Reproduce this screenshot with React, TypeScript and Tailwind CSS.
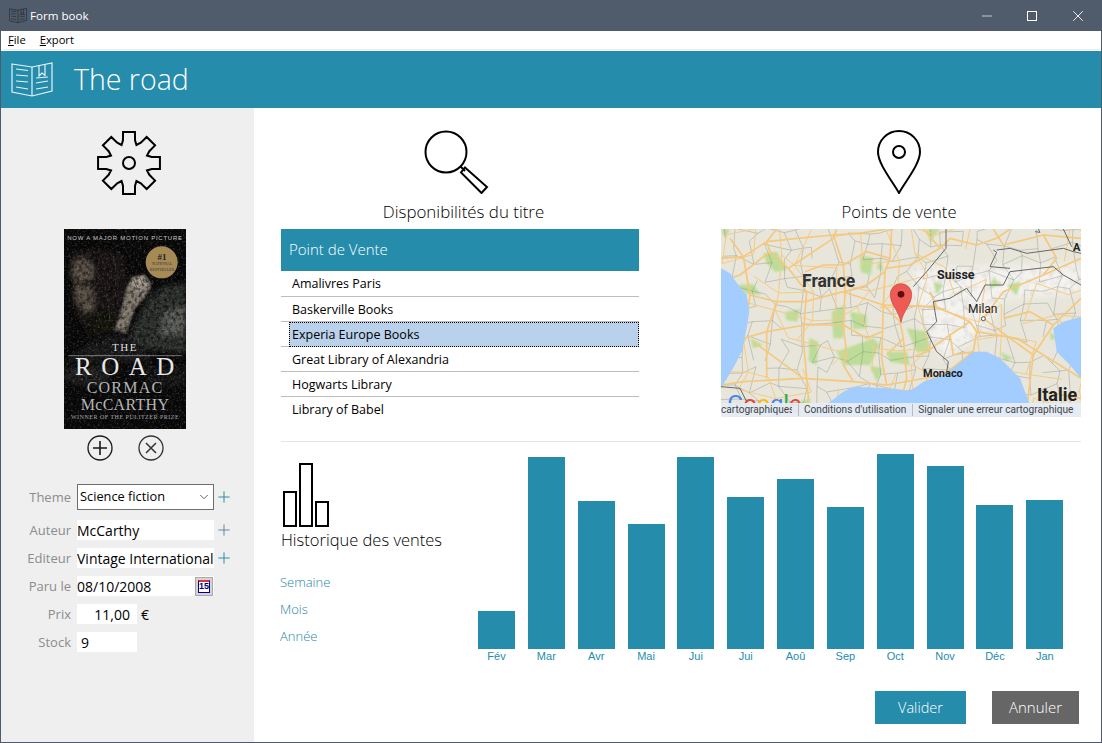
import React from 'react';
import { ChevronDown, Plus, Minus, X } from 'lucide-react';

const sales = [
  { label: 'Fév', height: 38 },
  { label: 'Mar', height: 192 },
  { label: 'Avr', height: 148 },
  { label: 'Mai', height: 125 },
  { label: 'Jui', height: 192 },
  { label: 'Jui', height: 152 },
  { label: 'Aoû', height: 170 },
  { label: 'Sep', height: 142 },
  { label: 'Oct', height: 195 },
  { label: 'Nov', height: 183 },
  { label: 'Déc', height: 144 },
  { label: 'Jan', height: 149 },
];

const stores = ['Amalivres Paris', 'Baskerville Books', 'Experia Europe Books', 'Great Library of Alexandria', 'Hogwarts Library', 'Library of Babel'];

// Gear outline: 8 square teeth around a centre
const gearPoints = () => {
  const pts: string[] = [];
  const at = (r: number, a: number) => `${(34 + r * Math.cos(a)).toFixed(2)},${(34 + r * Math.sin(a)).toFixed(2)}`;
  for (let i = 0; i < 8; i++) {
    const a = (i * Math.PI) / 4 - Math.PI / 2;
    pts.push(at(23.5, a - 0.26), at(31.5, a - 0.19), at(31.5, a + 0.19), at(23.5, a + 0.26), at(19.5, a + Math.PI / 8));
  }
  return pts.join(' ');
};

// Jittered net for the small roads of the map
const jitter = (n: number) => {
  const v = Math.sin(n * 127.1) * 43758.5453;
  return v - Math.floor(v) - 0.5;
};
const roadNet = (step: number, seed: number, skip: number) => {
  let d = '';
  const node = (c: number, r: number) => {
    const k = c * 31 + r * 57 + seed;
    return `${(33 + c * step + jitter(k) * step * 0.8).toFixed(0)} ${(312 + r * step + jitter(k + 9) * step * 0.8).toFixed(0)}`;
  };
  for (let c = 0; c <= Math.ceil(1080 / step); c++) {
    for (let r = 0; r <= Math.ceil(564 / step); r++) {
      if (jitter(c * 13 + r * 7 + seed) > skip) d += `M${node(c, r)} L${node(c + 1, r)} `;
      if (jitter(c * 5 + r * 17 + seed + 3) > skip) d += `M${node(c, r)} L${node(c, r + 1)} `;
    }
  }
  return d;
};
const greyNet = roadNet(48, 3, -0.2);
const orangeNet = roadNet(85, 11, -0.05);

const majorRoads = [
  'M33 400 L100 395 L170 350 L260 340 L370 330 L450 325 L530 312',
  'M170 350 L200 312',
  'M170 350 L180 380 L235 430 L290 500 L285 560 L280 640 L290 760 L300 876',
  'M235 430 L370 340 L380 312',
  'M370 330 L400 420 L405 500 L400 600 L410 690 L400 720 L430 770',
  'M120 510 L200 530 L285 530 L400 500 L520 540 L570 590',
  'M545 312 L540 400 L525 440 L520 540 L515 700 L530 780',
  'M525 430 L600 420 L690 370 L720 340 L800 360 L860 340 L900 312',
  'M570 590 L580 640 L590 760 L580 800',
  'M520 540 L680 545 L780 590 L800 620 L920 640 L1113 760',
  'M800 620 L790 680',
  'M680 545 L660 500',
  'M100 640 L170 620 L285 600 L400 600',
  'M130 650 L280 760 L430 770 L530 780 L700 750 L790 680',
  'M33 780 L100 770 L280 760',
  'M170 620 L170 760',
  'M820 580 L880 500 L1000 450 L1113 400',
  'M820 580 L900 640 L970 690 L950 850',
  'M970 690 L1030 600 L1113 520',
  'M850 312 L880 360 L1000 330 L1113 340',
  'M720 630 L730 690 L790 680',
  'M580 640 L530 690',
  'M33 470 L90 450 L180 380',
  'M60 340 L100 395 L120 510 L100 640',
  'M400 420 L470 380 L540 400',
  'M405 500 L470 480 L525 440',
  'M640 312 L690 370',
  'M400 600 L470 640 L515 620',
  'M880 580 L960 560 L1030 600',
  'M600 700 L650 680 L720 630 L780 590',
  'M1000 330 L1040 400 L1000 450',
  'M200 530 L170 620',
  'M285 440 L340 420 L400 420',
  'M1000 800 L1113 820',
];

const greens = [
  'M160 385 L200 380 L232 435 L195 440 L170 415 Z',
  'M450 392 L490 398 L482 450 L452 440 Z',
  'M80 480 L130 478 L152 510 L105 505 Z',
  'M225 562 L270 552 L262 590 L228 585 Z',
  'M298 640 L325 650 L320 720 L296 708 Z',
  'M365 560 L405 540 L400 640 L370 640 Z',
  'M420 560 L470 570 L470 610 L430 612 Z',
  'M380 680 L490 640 L510 660 L480 720 L400 720 Z',
  'M590 610 L650 620 L660 680 L620 682 Z',
  'M530 680 L590 680 L600 720 L540 710 Z',
  'M480 722 L520 730 L500 770 Z',
  'M850 458 L872 480 L838 490 Z',
  'M890 480 L932 470 L920 512 Z',
  'M870 680 L910 700 L885 708 Z',
  'M1020 620 L1042 640 L1022 645 Z',
  'M650 312 L690 312 L660 350 Z',
  'M120 640 L160 660 L130 670 Z',
  'M510 402 L522 440 L500 430 Z',
  'M33 312 L60 312 L45 340 Z',
  'M670 470 L700 480 L680 510 Z',
  'M240 840 L300 820 L300 876 L240 876 Z',
];

const borders = [
  'M708 312 L708 370 L650 440 L610 485',
  'M670 530 L720 520 L770 490 L800 530 L825 480 L880 480 L900 440 L1030 425 L1060 450 L1113 480',
  'M670 530 L680 590 L650 620 L680 680 L715 710 L710 740',
  'M850 375 L860 382 L840 425 L900 430',
  'M860 375 L900 370 L950 385 L1060 370 L1090 380 L1113 385',
  'M1060 312 L1085 365',
  'M985 312 L990 322 L975 320',
  'M33 785 L90 790 L110 830',
];

function MapView() {
  return (
    <div className="relative h-[188px] w-[360px] overflow-hidden bg-[#e8e6da] font-['Roboto',sans-serif]">
      <svg viewBox="33 312 1080 564" className="absolute inset-0 h-full w-full">
        <defs>
          <filter id="snow"><feGaussianBlur stdDeviation="12" /></filter>
          <filter id="soft"><feGaussianBlur stdDeviation="3" /></filter>
          <filter id="rock">
            <feTurbulence type="fractalNoise" baseFrequency="0.05" numOctaves="3" seed="8" />
            <feColorMatrix values="0 0 0 0 0.55  0 0 0 0 0.55  0 0 0 0 0.55  2.2 0 0 0 -1" />
          </filter>
          <clipPath id="alps">
            <path d="M610 430 L1113 420 L1113 500 L880 520 L820 620 L700 700 L650 620 L610 520 Z" />
          </clipPath>
        </defs>
        <path d="M610 430 L1113 420 L1113 500 L880 520 L820 620 L700 700 L650 620 L610 520 Z" fill="#f4f3ef" filter="url(#snow)" />
        <rect x="600" y="410" width="513" height="300" filter="url(#rock)" clipPath="url(#alps)" opacity="0.45" />
        <g fill="#bcdc97" filter="url(#soft)">
          {greens.map((d, i) => <path key={i} d={d} />)}
        </g>
        <path d={greyNet} fill="none" stroke="#83857d" strokeWidth="1.5" opacity="0.75" />
        <path d={orangeNet} fill="none" stroke="#f6cb82" strokeWidth="3" />
        <g fill="none" stroke="#f5c87d" strokeWidth="5" strokeLinejoin="round">
          {majorRoads.map((d, i) => <path key={i} d={d} />)}
        </g>
        <g fill="#a3ccff">
          <path d="M33 430 L60 445 L85 480 L110 510 L118 560 L110 610 L95 680 L75 720 L33 790 Z" />
          <path d="M300 876 L400 800 L430 785 L530 790 L600 798 L640 770 L710 745 L790 680 L830 680 L870 700 L930 760 L960 840 L975 876 Z" />
          <path d="M1113 575 L1060 590 L1030 610 L1040 680 L1080 720 L1113 760 Z" />
        </g>
        <g fill="none" stroke="#66696b" strokeWidth="3" strokeLinejoin="round">
          {borders.map((d, i) => <path key={i} d={d} />)}
        </g>
        <circle cx="820" cy="581" r="6" fill="#fff" stroke="#333" strokeWidth="2.5" />
        <path d="M573 592 C566 555 541 540 541 508 A32 32 0 0 1 605 508 C605 540 580 555 573 592 Z" fill="#ee5b55" stroke="#c5403c" strokeWidth="2" />
        <circle cx="573" cy="508" r="10" fill="#5e0f0d" />
        <text x="52" y="861" fontSize="72" letterSpacing="-1">
          <tspan fill="#4285f4">G</tspan><tspan fill="#ea4335">o</tspan><tspan fill="#fbbc05">o</tspan><tspan fill="#4285f4">g</tspan><tspan fill="#34a853">l</tspan><tspan fill="#ea4335">e</tspan>
        </text>
      </svg>
      <span className="absolute left-[81px] top-[42px] text-[17.5px] font-bold leading-5 text-[#333]">France</span>
      <span className="absolute left-[216px] top-[38px] text-[12.5px] font-bold leading-4 text-[#222]">Suisse</span>
      <span className="absolute left-[247px] top-[72px] text-[12px] leading-4 text-[#222]">Milan</span>
      <span className="absolute left-[202px] top-[137px] text-[11px] font-bold leading-4 text-[#222]">Monaco</span>
      <span className="absolute left-[316px] top-[156px] text-[18px] font-bold leading-5 text-[#222]">Italie</span>
      <span className="absolute left-[352px] top-[11px] text-[11px] font-bold leading-4 text-[#222]">A</span>
      <div className="absolute bottom-0 left-0 right-0 flex h-[14px] items-center whitespace-nowrap bg-[#e6ecf6]/95 text-[10.1px] text-[#444]">
        <span className="w-[71px] overflow-hidden text-right">cartographiques</span>
        <span className="ml-[6px] border-l border-[#bbb] pl-[5px] pr-[6px] leading-3">Conditions d'utilisation</span>
        <span className="ml-[0px] border-l border-[#bbb] pl-[5px] leading-3">Signaler une erreur cartographique</span>
      </div>
    </div>
  );
}

function BookCover() {
  return (
    <div className="relative h-[200px] w-[122px] overflow-hidden bg-[#0a0a0a] font-['Liberation_Serif',serif] text-white">
      <svg viewBox="42 327 366 600" className="absolute inset-0 h-full w-full">
        <defs>
          <filter id="cover"><feGaussianBlur stdDeviation="8" /></filter>
          <filter id="coverLight"><feGaussianBlur stdDeviation="3.5" /></filter>
          <filter id="grit">
            <feTurbulence type="fractalNoise" baseFrequency="0.16" numOctaves="3" seed="4" />
            <feColorMatrix values="0 0 0 0 1  0 0 0 0 1  0 0 0 0 1  2.4 0 0 0 -1.25" />
          </filter>
          <filter id="gritDark">
            <feTurbulence type="fractalNoise" baseFrequency="0.09" numOctaves="3" seed="9" />
            <feColorMatrix values="0 0 0 0 0  0 0 0 0 0  0 0 0 0 0  3 0 0 0 -1.2" />
          </filter>
        </defs>
        <g filter="url(#cover)">
          <path d="M60 400 L130 385 L220 400 L232 470 L210 600 L120 650 L70 560 Z" fill="#1c1815" />
          <path d="M68 425 L100 412 L132 440 L126 500 L134 560 L112 590 L88 555 L72 532 L80 490 L64 462 Z" fill="#5c5147" />
          <path d="M88 482 L128 478 L126 500 L94 502 Z" fill="#221c19" />
          <path d="M105 580 L190 560 L200 640 L125 650 Z" fill="#151311" />
          <path d="M300 530 L350 495 L408 490 L408 700 L220 680 L240 640 L275 570 Z" fill="#2e302e" />
          <path d="M340 580 L408 555 L408 640 L330 650 Z" fill="#5a5c59" />
          <path d="M120 670 L220 640 L285 685 L305 725 L42 725 Z" fill="#1e1f1e" />
          <path d="M42 745 L190 735 L165 800 L42 785 Z" fill="#222322" />
          <path d="M280 745 L408 735 L408 800 L300 810 Z" fill="#171817" />
        </g>
        <g filter="url(#coverLight)">
          <path d="M228 505 L246 472 L282 462 L305 490 L296 518 L256 565 L228 638 L194 630 L216 562 Z" fill="#857c71" />
          <path d="M240 482 L280 470 L296 495 L262 512 Z" fill="#aaa196" />
        </g>
        <path d="M250 478 L262 505 M268 470 L280 498 M284 468 L294 490" stroke="#3c3732" strokeWidth="2.5" opacity="0.7" />
        <path d="M80 405 L130 450 M110 395 L150 470 M150 400 L180 480 M190 410 L205 500 M170 520 L180 600 M135 560 L160 630" stroke="#4a443f" strokeWidth="2" fill="none" opacity="0.6" />
        <rect x="42" y="327" width="366" height="600" filter="url(#gritDark)" opacity="0.55" />
        <rect x="42" y="327" width="366" height="600" filter="url(#grit)" opacity="0.22" />
        <circle cx="335" cy="427" r="48" fill="#a68a56" />
        <path d="M55 707 L395 707" stroke="#ddd" strokeWidth="1.5" />
      </svg>
      <span className="absolute inset-x-0 top-[5px] whitespace-nowrap text-center font-['Liberation_Sans',sans-serif] text-[6px] leading-2 tracking-[0.75px] text-[#c8c8c8]">NOW A MAJOR MOTION PICTURE</span>
      <span className="absolute left-[82px] top-[22px] w-8 text-center text-[9px] font-bold leading-3 text-[#222]">#1</span>
      <span className="absolute left-[82px] top-[32px] w-8 text-center text-[4px] leading-[6px] text-[#333]">NATIONAL BESTSELLER</span>
      <span className="absolute inset-x-0 top-[112px] text-center text-[11px] leading-3 tracking-[1.5px] text-[#ddd]">THE</span>
      <span className="absolute inset-x-0 top-[124px] whitespace-nowrap pl-[9px] text-center text-[25px] font-light leading-7 tracking-[9.5px] text-[#e8e8e8]">ROAD</span>
      <span className="absolute inset-x-0 top-[151px] whitespace-nowrap text-center text-[16px] leading-4 tracking-[1.2px] text-[#b5b5b5]">CORMAC</span>
      <span className="absolute inset-x-0 top-[168px] whitespace-nowrap text-center text-[16px] leading-4 tracking-[0.3px] text-[#b5b5b5]">McCARTHY</span>
      <span className="absolute inset-x-0 top-[184px] whitespace-nowrap text-center text-[6px] leading-2 tracking-[0.5px] text-[#a5a5a5]">WINNER OF THE PULITZER PRIZE</span>
    </div>
  );
}

const BookIcon = ({ className }: { className: string }) => (
  <svg viewBox="0 0 42 35" fill="none" stroke="currentColor" strokeWidth="1.2" className={className}>
    <path d="M1 2 L21 5 L41 1 L41 29 L21 34 L1 30 Z" />
    <path d="M21 5 V34" />
    <path d="M28 3.8 V14 L31 11 L34 13.5 V2.8" />
    <path d="M5 7 L17 8.5 M5 13 L17 14 M5 19 L17 20 M5 25 L17 27 M25 27 L37 25 M25 21 L37 19 M25 16 L37 15" />
  </svg>
);

const FormLabel = ({ children }: { children: React.ReactNode }) => (
  <span className="w-[71px] pr-[1px] pt-[1px] text-right text-[13px] text-[#8c8c8c]">{children}</span>
);

const AddIcon = ({ dark }: { dark?: boolean }) => (
  <Plus size={18} strokeWidth={1.3} className={`ml-[-4px] ${dark ? 'text-[#5d8795]' : 'text-[#268cab]'}`} />
);

function Sidebar() {
  return (
    <aside className="flex w-[253px] shrink-0 flex-col bg-[#efefef]">
      <div className="flex justify-center pl-[3px] pt-[21px]">
        <svg viewBox="0 0 68 68" fill="none" stroke="#000" strokeWidth="2" className="h-[68px] w-[68px]">
          <polygon points={gearPoints()} />
          <circle cx="34" cy="34" r="6" />
        </svg>
      </div>
      <div className="mt-[32px] flex justify-center pr-[5px]">
        <BookCover />
      </div>
      <div className="mt-[6px] flex justify-center gap-[25px] pr-[5px]">
        <svg viewBox="0 0 26 26" fill="none" stroke="#1a1a1a" strokeWidth="1.3" className="h-[26px] w-[26px]">
          <circle cx="13" cy="13" r="12" />
          <path d="M6 13 H20 M13 6 V20" strokeWidth="1.6" />
        </svg>
        <svg viewBox="0 0 26 26" fill="none" stroke="#333" strokeWidth="1.3" className="h-[26px] w-[26px]">
          <circle cx="13" cy="13" r="12" />
          <path d="M8 8 L18 18 M18 8 L8 18" strokeWidth="1.5" />
        </svg>
      </div>
      <div className="mt-[23px] flex flex-col text-[14px] text-black">
        <div className="flex h-[26px] items-center gap-[5px]">
          <FormLabel>Theme</FormLabel>
          <div className="flex h-[26px] w-[137px] items-center justify-between border border-[#6e6e6e] bg-white pl-[2px] pr-[1px] text-[12.8px]">
            <span>Science fiction</span>
            <ChevronDown size={14} strokeWidth={1.4} className="mr-[1px] text-[#444]" />
          </div>
          <AddIcon />
        </div>
        <div className="mt-[10px] flex h-5 items-center gap-[5px]">
          <FormLabel>Auteur</FormLabel>
          <div className="flex h-5 w-[137px] items-center bg-white">McCarthy</div>
          <AddIcon dark />
        </div>
        <div className="mt-2 flex h-5 items-center gap-[5px]">
          <FormLabel>Editeur</FormLabel>
          <div className="flex h-5 w-[137px] items-center overflow-hidden whitespace-nowrap bg-white">Vintage International</div>
          <AddIcon />
        </div>
        <div className="mt-2 flex h-5 items-center gap-[5px]">
          <FormLabel>Paru le</FormLabel>
          <div className="flex h-5 w-[137px] items-center justify-between bg-white pr-[1px]">
            <span>08/10/2008</span>
            <span className="flex h-[19px] w-[18px] flex-col items-center justify-center border border-[#aaa] bg-[#d4d4d4]">
              <span className="flex h-[13px] w-[12px] items-center justify-center border border-[#00008b] border-t-[2px] border-t-[#d33] bg-white font-['Liberation_Sans',sans-serif] text-[9px] font-bold leading-none text-[#00008b]">15</span>
            </span>
          </div>
        </div>
        <div className="mt-2 flex h-5 items-center gap-[5px]">
          <FormLabel>Prix</FormLabel>
          <div className="flex h-5 w-[60px] items-center justify-end bg-white pr-[7px]">11,00</div>
          <span className="ml-[-1px]">€</span>
        </div>
        <div className="mt-2 flex h-5 items-center gap-[5px]">
          <FormLabel>Stock</FormLabel>
          <div className="flex h-5 w-[60px] items-center bg-white pl-1">9</div>
        </div>
      </div>
    </aside>
  );
}

function StoreList() {
  return (
    <div className="w-[358px]">
      <div className="flex h-[42px] items-center bg-[#268cab] pb-[2px] pl-[8px] text-[15px] font-light text-white">Point de Vente</div>
      {stores.map((store, i) => (
        <div key={store} className={`flex text-[12.5px] text-black ${i === 0 ? 'h-[26px]' : 'h-[25px]'} ${i < 5 ? 'border-b border-[#bdbdbd]' : ''}`}>
          {store === 'Experia Europe Books' ? (
            <div className="ml-[8px] mb-[-1px] flex flex-1 items-center border border-dotted border-black bg-[#b9d1ea] pl-[2px] pt-[1px]">{store}</div>
          ) : (
            <div className="flex items-center pl-[11px] pt-[2px]">{store}</div>
          )}
        </div>
      ))}
    </div>
  );
}

export default function App() {
  return (
    <div className="flex h-[743px] w-[1102px] flex-col overflow-hidden border border-[#4f5b6a] border-t-0 bg-white font-['Open_Sans',sans-serif]">
      {/* Title bar */}
      <div className="flex h-[31px] shrink-0 items-center bg-[#505c6b] text-white">
        <BookIcon className="ml-[8px] h-[15px] w-[18px] text-[#16191d]" />
        <span className="ml-[3px] text-[11.6px]">Form book</span>
        <div className="ml-auto flex items-center">
          <Minus size={16} strokeWidth={1} className="mr-[31px]" />
          <svg viewBox="0 0 12 12" fill="none" stroke="currentColor" className="mr-[31px] h-3 w-3">
            <rect x="1.5" y="1.5" width="9" height="9" />
          </svg>
          <X size={18} strokeWidth={1.2} className="mr-[14px]" />
        </div>
      </div>
      {/* Menu */}
      <div className="flex h-[19px] shrink-0 items-center gap-[14px] border-b border-[#eeeeee] bg-white pl-[7px] text-[11.2px] text-black">
        <span><span className="underline">F</span>ile</span>
        <span><span className="underline">E</span>xport</span>
      </div>
      <div className="h-[1px] shrink-0 bg-white" />
      {/* Header */}
      <div className="flex h-[57px] shrink-0 items-center bg-[#268cab] pb-[1px] text-white">
        <BookIcon className="ml-[10px] h-[35px] w-[42px] text-[#e6f3f7]" />
        <h1 className="ml-[21px] text-[28.5px] font-light">The road</h1>
      </div>
      <div className="flex min-h-0 flex-1">
        <Sidebar />
        <main className="flex flex-1 flex-col pl-[27px] pr-[20px]">
          <section className="flex justify-between">
            <div className="flex w-[358px] flex-col items-center">
              <svg viewBox="0 0 66 64" fill="none" stroke="#000" strokeWidth="2" className="mt-[22px] ml-[-6px] h-[64px] w-[66px]">
                <circle cx="22" cy="22" r="20.5" />
                <path d="M36.5 36.5 L41 41" />
                <path d="M41 38.5 L63 58 L57.5 64 L37 43.5 Z" transform="translate(0 -1)" />
              </svg>
              <h2 className="mt-[6px] ml-[7px] h-[24px] whitespace-nowrap text-[16.9px] leading-6 font-light text-black">Disponibilités du titre</h2>
              <div className="mt-[5px]"><StoreList /></div>
            </div>
            <div className="flex w-[360px] flex-col items-center">
              <svg viewBox="0 0 44 64" fill="none" stroke="#000" strokeWidth="2" className="mt-[22px] ml-[-4px] h-[64px] w-[44px]">
                <path d="M22 63 C16 52 1 34 1 22 A21 21 0 0 1 43 22 C43 34 28 52 22 63 Z" />
                <circle cx="22" cy="22" r="6" />
              </svg>
              <h2 className="mt-[6px] ml-[-4px] h-[24px] whitespace-nowrap text-[16.6px] leading-6 font-light text-black">Points de vente</h2>
              <div className="mt-[5px]"><MapView /></div>
            </div>
          </section>
          <div className="mt-[19px] h-[1px] shrink-0 bg-[#e5e5e5]" />
          <section className="flex">
            <div className="flex w-[197px] shrink-0 flex-col">
              <svg viewBox="0 0 48 64" fill="none" stroke="#000" strokeWidth="2" className="mt-[21px] ml-[1px] h-[64px] w-[48px]">
                <rect x="2" y="29" width="12" height="34" />
                <rect x="18" y="1" width="12" height="62" />
                <rect x="34" y="39" width="12" height="24" />
              </svg>
              <h2 className="mt-[1px] whitespace-nowrap text-[16.5px] leading-6 font-light text-black">Historique des ventes</h2>
              <div className="ml-[-1px] mt-[21px] flex flex-col gap-[9px] text-[13px] leading-[18px] font-light text-[#1f86a8]">
                <span>Semaine</span>
                <span>Mois</span>
                <span>Année</span>
              </div>
            </div>
            <div className="mt-[12px] flex h-[195px] items-end gap-[12.85px]">
              {sales.map((m, i) => (
                <div key={i} className="relative w-[37px] bg-[#268cab]" style={{ height: m.height }}>
                  <span className="absolute inset-x-[-6px] top-full text-center font-['Liberation_Sans',sans-serif] text-[11px] leading-[14px] text-[#268cab]">{m.label}</span>
                </div>
              ))}
            </div>
          </section>
          <div className="mt-[42px] flex justify-end gap-[26px] pr-[2px]">
            <button className="h-[33px] w-[91px] bg-[#268cab] text-[14.5px] font-light text-white">Valider</button>
            <button className="h-[33px] w-[87px] bg-[#666666] text-[15px] font-light text-white">Annuler</button>
          </div>
        </main>
      </div>
    </div>
  );
}
